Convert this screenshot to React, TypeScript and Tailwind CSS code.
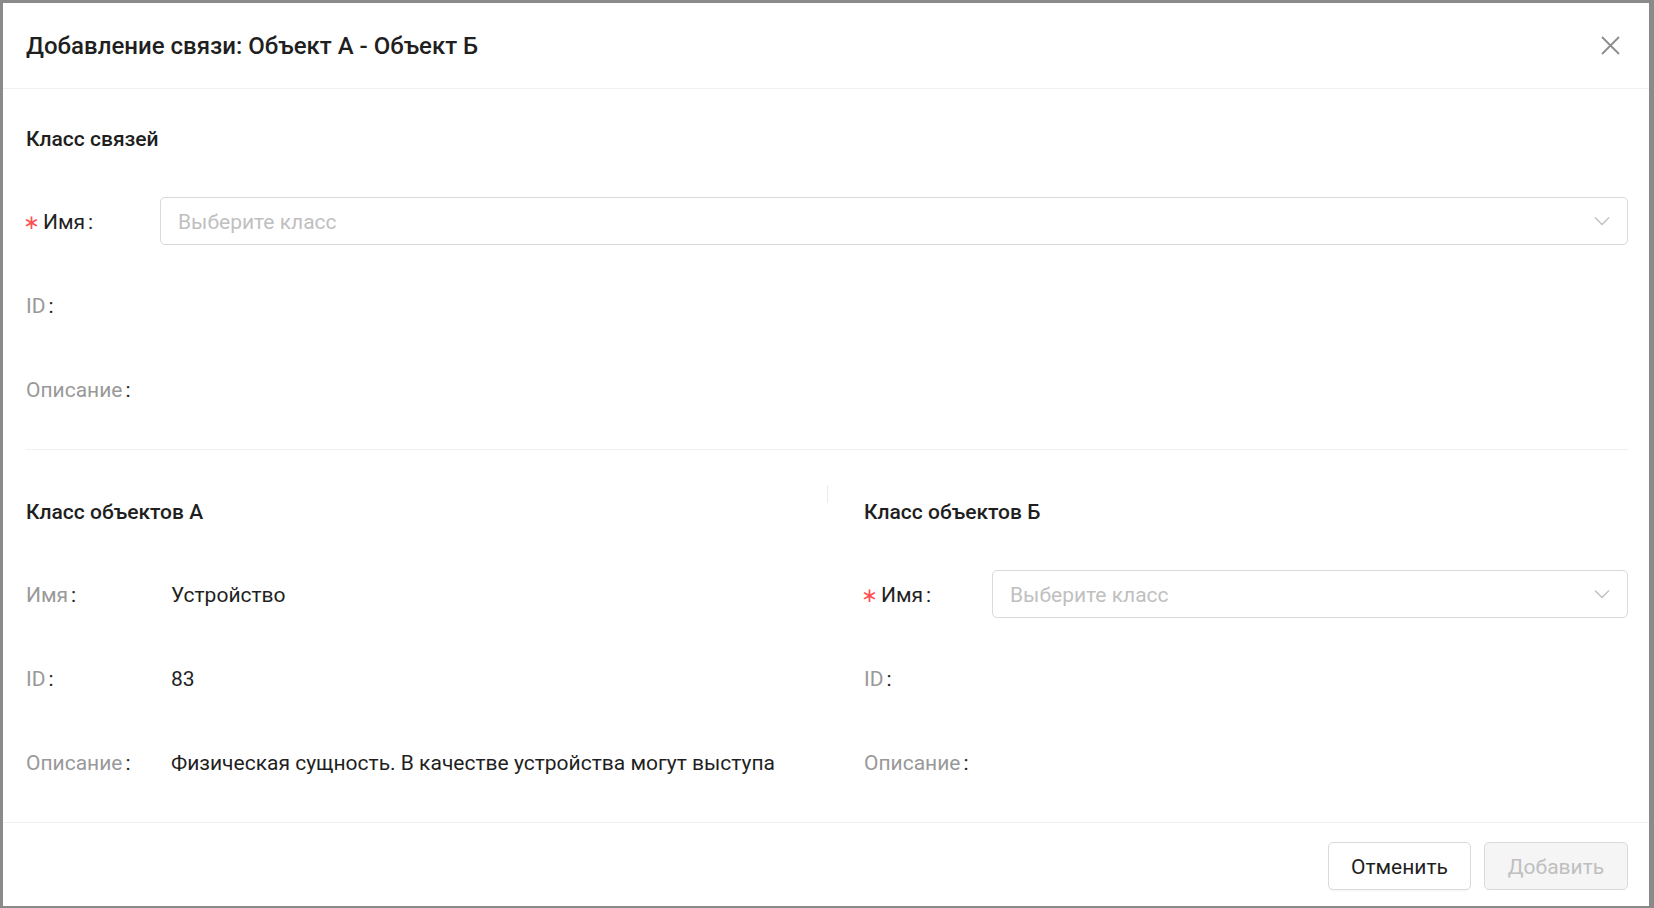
import React from 'react';

const ChevronDown = () => (
  <svg width="16" height="16" viewBox="0 0 16 16" fill="none" className="text-[#bfbfbf]">
    <path d="M1 4.5 L8 11.5 L15 4.5" stroke="currentColor" strokeWidth="1.3" />
  </svg>
);

const CloseIcon = () => (
  <svg width="19" height="19" viewBox="0 0 19 19" fill="none" className="text-[#8c8c8c]">
    <path d="M1 1 L18 18 M18 1 L1 18" stroke="currentColor" strokeWidth="1.8" />
  </svg>
);

interface FieldProps {
  label: string;
  required?: boolean;
  muted?: boolean;
  labelWidth: string;
  last?: boolean;
  children?: React.ReactNode;
}

const Field: React.FC<FieldProps> = ({ label, required, muted, labelWidth, last, children }) => (
  <div className={`flex items-center h-12 ${last ? '' : 'mb-9'}`}>
    <div className={`${labelWidth} shrink-0 flex items-center pt-[2px]`}>
      {required && (
        <span className="w-[11px] mr-[6px] flex justify-center">
          <span className="text-[#ff4d4f] text-[20px] font-['DejaVu_Sans',sans-serif] leading-none">∗</span>
        </span>
      )}
      <span className={muted ? 'text-[#999999]' : 'text-[#1f1f1f]'}>{label}</span>
      <span className="text-[#1f1f1f] ml-[3px]">:</span>
    </div>
    <div className="flex-1 min-w-0 pt-[2px]">{children}</div>
  </div>
);

const SelectBox = () => (
  <div className="h-12 -mt-[2px] flex items-center justify-between border border-[#d9d9d9] rounded-[5px] pl-[17px] pr-[17px] bg-white">
    <span className="text-[#bfbfbf] pt-[2px]">Выберите класс</span>
    <ChevronDown />
  </div>
);

const Heading = ({ children }: { children: React.ReactNode }) => (
  <div className="h-[33px] leading-[33px] pt-[2px] box-content text-[21px] font-medium text-[#1f1f1f] mb-[41px]">{children}</div>
);

export default function App() {
  return (
    <div className="w-full h-[908px] bg-[#8a8a8a] pt-[3px] pl-[3px] font-[Roboto,sans-serif] text-[21px] leading-[33px] overflow-hidden">
      <div className="w-[1646px] h-[903px] bg-white flex flex-col">
        {/* Header */}
        <div className="h-[86px] shrink-0 border-b border-[#f0f0f0] flex items-center justify-between pl-[23px] pr-[29px]">
          <div className="text-[24px] font-medium text-[#1f1f1f] pt-[2px]">Добавление связи: Объект А - Объект Б</div>
          <CloseIcon />
        </div>

        {/* Body */}
        <div className="flex-1 pt-8 pl-[23px] pr-[21px]">
          <Heading>Класс связей</Heading>
          <Field label="Имя" required labelWidth="w-[134px]">
            <SelectBox />
          </Field>
          <Field label="ID" muted labelWidth="w-[134px]" />
          <Field label="Описание" muted labelWidth="w-[134px]" />
          <div className="h-px bg-[#f0f0f0] mt-9" />

          <div className="flex">
            <div className="w-[801px] shrink-0 pt-[44px]">
              <Heading>Класс объектов А</Heading>
              <Field label="Имя" muted labelWidth="w-[145px]">
                <span className="text-[#1f1f1f]">Устройство</span>
              </Field>
              <Field label="ID" muted labelWidth="w-[145px]">
                <span className="text-[#1f1f1f]">83</span>
              </Field>
              <Field label="Описание" muted labelWidth="w-[145px]" last>
                <div className="text-[#1f1f1f] whitespace-nowrap overflow-hidden">
                  Физическая сущность. В качестве устройства могут выступа
                </div>
              </Field>
            </div>
            <div className="w-px h-[18px] bg-[#ebebeb] mt-[35px] shrink-0" />
            <div className="flex-1 ml-9 pt-[44px]">
              <Heading>Класс объектов Б</Heading>
              <Field label="Имя" required labelWidth="w-[128px]">
                <SelectBox />
              </Field>
              <Field label="ID" muted labelWidth="w-[128px]" />
              <Field label="Описание" muted labelWidth="w-[128px]" last />
            </div>
          </div>
        </div>

        {/* Footer */}
        <div className="h-[84px] shrink-0 border-t border-[#f0f0f0] flex justify-end items-start pt-[19px] pr-[21px] gap-[13px]">
          <button className="w-[143px] h-12 pt-[2px] rounded-[5px] border border-[#d9d9d9] bg-white text-[#1f1f1f] shadow-[0_2px_0_rgba(0,0,0,0.02)]">
            Отменить
          </button>
          <button className="w-[144px] h-12 pt-[2px] rounded-[5px] border border-[#d9d9d9] bg-[#f5f5f5] text-[#bfbfbf]" disabled>
            Добавить
          </button>
        </div>
      </div>
    </div>
  );
}
